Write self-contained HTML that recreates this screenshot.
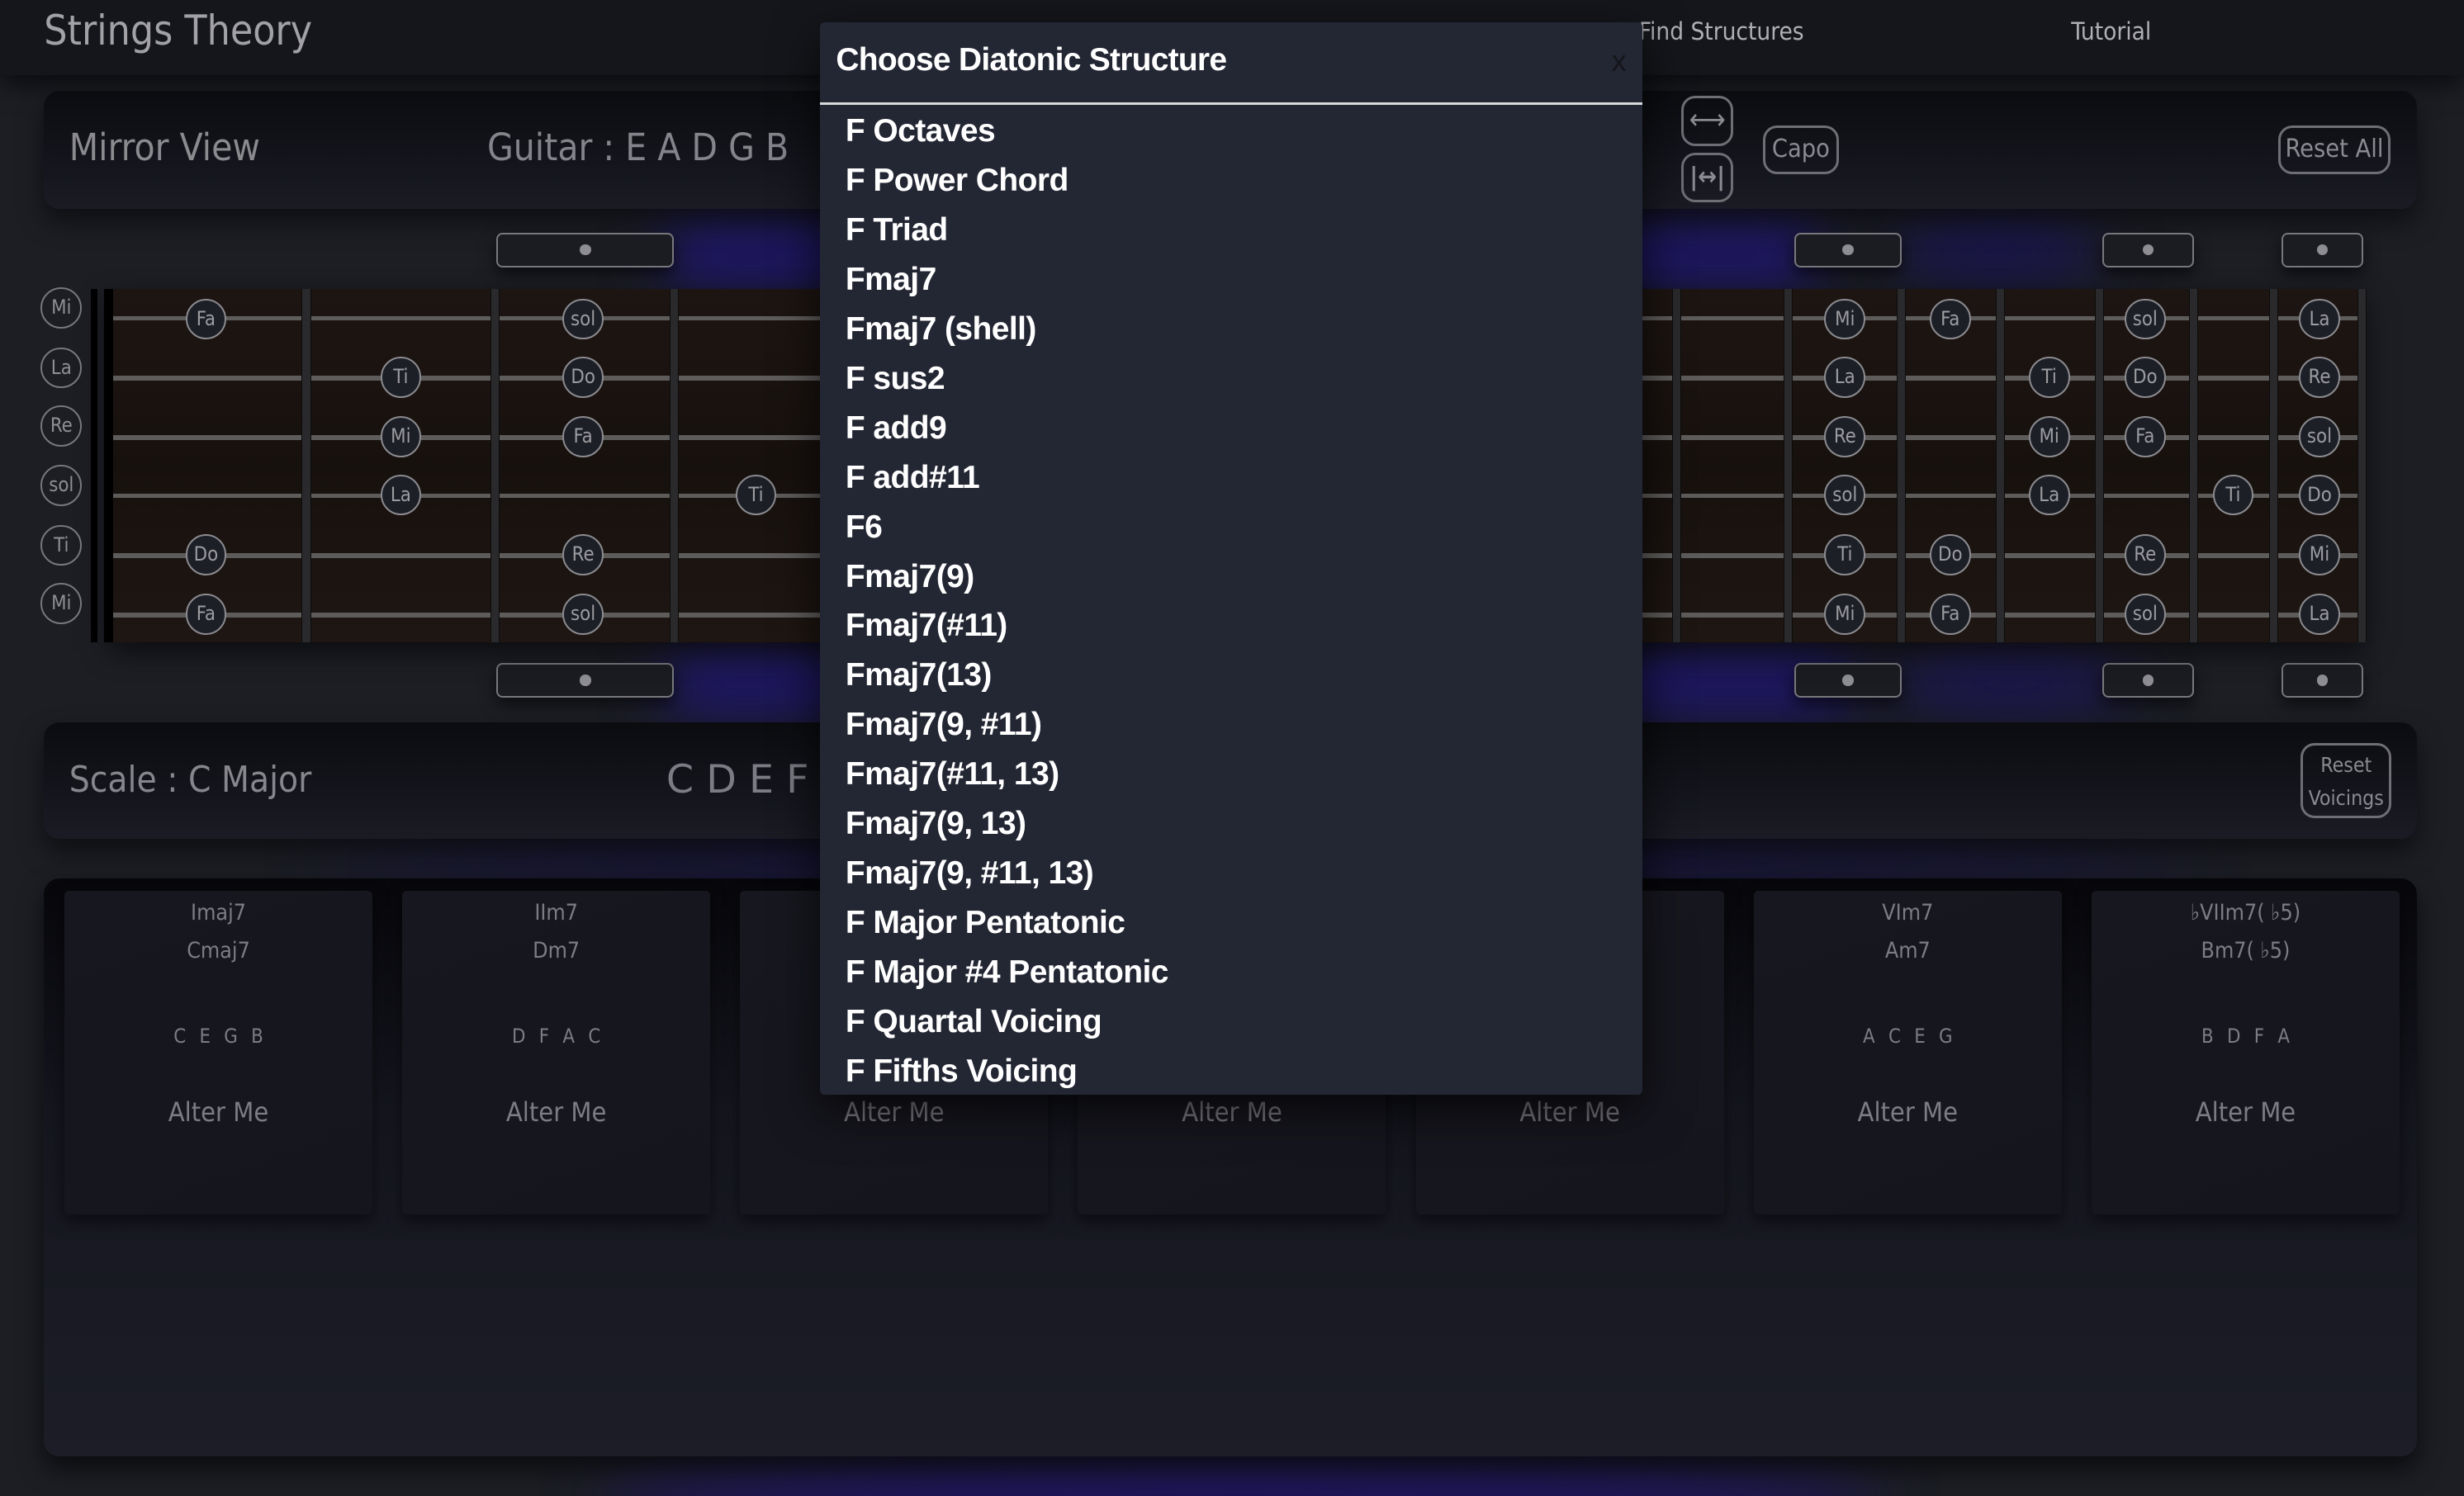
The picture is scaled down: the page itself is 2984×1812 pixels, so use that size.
<!DOCTYPE html>
<html><head><meta charset="utf-8"><style>
html,body{margin:0;padding:0;background:#1b1d23;overflow:hidden;width:2984px;height:1812px}
#root{zoom:1.90306;position:relative;width:1568px;height:952px;overflow:hidden;background:#1c1e24;font-family:"DejaVu Sans","Liberation Sans",sans-serif;color:#8d8d93}
.a{position:absolute}
.glow{position:absolute;border-radius:50%;filter:blur(18px)}
.hdr{left:0;top:0;width:1568px;height:48px;background:#15161b;box-shadow:0 6px 14px rgba(0,0,0,.6)}
.panel{border-radius:10px;background:linear-gradient(180deg,#0b0c10 0%,#1a1b24 100%);box-shadow:0 8px 16px rgba(0,0,0,.5)}
.btn{border:2px solid #6e6e74;border-radius:9px;box-sizing:border-box;color:#8a8a90;text-align:center;font-family:"DejaVu Sans Condensed","DejaVu Sans",sans-serif}
.mk{height:22px;border:1.5px solid #77777c;border-radius:4px;background:#1b1c22;box-sizing:border-box;box-shadow:0 4px 10px rgba(0,0,0,.6)}
.mk:after{content:"";position:absolute;left:50%;top:50%;width:7px;height:7px;margin:-3.5px 0 0 -3.5px;border-radius:50%;background:#8e8e92}
.fb{left:70px;top:184px;width:1435px;height:225px;background:linear-gradient(180deg,#1d1512 0%,#17110e 50%,#1e1612 100%)}
.str{position:absolute;left:72px;width:1430px;height:3px;background:#5e5c5b}
.fret{position:absolute;top:184px;width:6px;height:225px;background:#2a2a2c;border-left:1px solid #0c0c0c;border-right:1px solid #0c0c0c;box-sizing:border-box}
.n{position:absolute;width:24px;height:24px;margin:-13px 0 0 -13px;border:1.5px solid #8b8b8f;border-radius:50%;background:#1d1f27;color:#9c9ca0;font-size:12.5px;line-height:24px;text-align:center;font-family:"DejaVu Sans Condensed","DejaVu Sans",sans-serif}
.lab{position:absolute;left:26px;width:24px;height:24px;border:1.5px solid #77777c;border-radius:50%;color:#8f8f93;font-size:12.5px;line-height:24px;text-align:center;font-family:"DejaVu Sans Condensed","DejaVu Sans",sans-serif}
.card{position:absolute;top:567px;width:196px;height:206px;background:linear-gradient(160deg,#17181f,#15151d);border-radius:3px;box-shadow:0 4px 10px rgba(0,0,0,.5);text-align:center;color:#7c7c82}
.card .r{position:absolute;left:0;width:100%;font-family:"DejaVu Sans Condensed","DejaVu Sans",sans-serif}
.modal{left:522px;top:14px;width:523px;height:683px;background:#232633;box-shadow:0 10px 30px rgba(0,0,0,.7);border-radius:3px;font-family:"Liberation Sans",sans-serif;color:#fff}
.modal .it{position:absolute;left:16px;font-size:20.5px;font-weight:bold;letter-spacing:-.3px}
</style></head><body><div id="root">

<div class="glow" style="left:420px;top:138px;width:740px;height:48px;background:#1d1564;border-radius:20px"></div>
<div class="glow" style="left:1200px;top:140px;width:140px;height:40px;background:#18134d"></div>
<div class="glow" style="left:420px;top:412px;width:760px;height:46px;background:#1d1564;border-radius:20px"></div>
<div class="glow" style="left:1200px;top:415px;width:160px;height:40px;background:#1a1450"></div>
<div class="glow" style="left:200px;top:536px;width:1200px;height:26px;background:#150f45"></div>
<div class="glow" style="left:380px;top:930px;width:820px;height:50px;background:#1f1460"></div>

<div class="a hdr"></div>
<div class="a" style="left:28px;top:4px;font-size:26px;color:#a2a2a6;font-family:'DejaVu Sans Condensed','DejaVu Sans',sans-serif">Strings Theory</div>
<div class="a" style="left:1043px;top:11px;font-size:15.5px;color:#b0b0b4;font-family:'DejaVu Sans Condensed','DejaVu Sans',sans-serif">Find Structures</div>
<div class="a" style="left:1318px;top:11px;font-size:15.5px;color:#b0b0b4;font-family:'DejaVu Sans Condensed','DejaVu Sans',sans-serif">Tutorial</div>

<div class="a panel" style="left:28px;top:58px;width:1510px;height:75px"></div>
<div class="a" style="left:44px;top:80px;font-size:24px;color:#8a8a8f;font-family:'DejaVu Sans Condensed','DejaVu Sans',sans-serif">Mirror View</div>
<div class="a" style="left:310px;top:80px;font-size:24px;color:#84848b;font-family:'DejaVu Sans Condensed','DejaVu Sans',sans-serif">Guitar : E A D G B</div>
<div class="a btn" style="left:1070px;top:61px;width:33px;height:32px;font-size:18px;line-height:28px">⟷</div>
<div class="a btn" style="left:1070px;top:97px;width:33px;height:32px;font-size:16px;line-height:28px;font-weight:bold">|↔|</div>
<div class="a btn" style="left:1122px;top:80px;width:48px;height:31px;font-size:16px;line-height:27px">Capo</div>
<div class="a btn" style="left:1450px;top:80px;width:71px;height:31px;font-size:16px;line-height:27px">Reset All</div>

<div class="a mk" style="left:316px;top:148px;width:113px"></div>
<div class="a mk" style="left:1142px;top:148px;width:68px"></div>
<div class="a mk" style="left:1338px;top:148px;width:58px"></div>
<div class="a mk" style="left:1452px;top:148px;width:52px"></div>
<div class="a mk" style="left:316px;top:422px;width:113px"></div>
<div class="a mk" style="left:1142px;top:422px;width:68px"></div>
<div class="a mk" style="left:1338px;top:422px;width:58px"></div>
<div class="a mk" style="left:1452px;top:422px;width:52px"></div>

<div class="a fb" style="box-shadow:0 6px 16px rgba(0,0,0,.6)"></div>
<div class="a" style="left:58px;top:184px;width:4px;height:225px;background:#000"></div>
<div class="a" style="left:66px;top:184px;width:6px;height:225px;background:#000"></div>
<div class="str" style="top:201px"></div><div class="str" style="top:239px"></div><div class="str" style="top:277px"></div>
<div class="str" style="top:314px"></div><div class="str" style="top:352px"></div><div class="str" style="top:390px"></div>
<div class="fret" style="left:192px"></div><div class="fret" style="left:312px"></div><div class="fret" style="left:426px"></div>
<div class="fret" style="left:534px"></div>
<div class="fret" style="left:1064px"></div><div class="fret" style="left:1135px"></div><div class="fret" style="left:1207px"></div>
<div class="fret" style="left:1270px"></div><div class="fret" style="left:1333px"></div><div class="fret" style="left:1393px"></div>
<div class="fret" style="left:1444px"></div><div class="fret" style="left:1500px"></div>

<div class="lab" style="top:183px">Mi</div><div class="lab" style="top:221px">La</div><div class="lab" style="top:258px">Re</div>
<div class="lab" style="top:296px">sol</div><div class="lab" style="top:334px">Ti</div><div class="lab" style="top:371px">Mi</div>

<div class="n" style="left:131px;top:203px">Fa</div><div class="n" style="left:371px;top:203px">sol</div>
<div class="n" style="left:255px;top:240px">Ti</div><div class="n" style="left:371px;top:240px">Do</div>
<div class="n" style="left:255px;top:278px">Mi</div><div class="n" style="left:371px;top:278px">Fa</div>
<div class="n" style="left:255px;top:315px">La</div><div class="n" style="left:481px;top:315px">Ti</div>
<div class="n" style="left:131px;top:353px">Do</div><div class="n" style="left:371px;top:353px">Re</div>
<div class="n" style="left:131px;top:391px">Fa</div><div class="n" style="left:371px;top:391px">sol</div>

<div class="n" style="left:1174px;top:203px">Mi</div><div class="n" style="left:1174px;top:240px">La</div><div class="n" style="left:1174px;top:278px">Re</div>
<div class="n" style="left:1174px;top:315px">sol</div><div class="n" style="left:1174px;top:353px">Ti</div><div class="n" style="left:1174px;top:391px">Mi</div>
<div class="n" style="left:1241px;top:203px">Fa</div><div class="n" style="left:1241px;top:353px">Do</div><div class="n" style="left:1241px;top:391px">Fa</div>
<div class="n" style="left:1304px;top:240px">Ti</div><div class="n" style="left:1304px;top:278px">Mi</div><div class="n" style="left:1304px;top:315px">La</div>
<div class="n" style="left:1365px;top:203px">sol</div><div class="n" style="left:1365px;top:240px">Do</div><div class="n" style="left:1365px;top:278px">Fa</div>
<div class="n" style="left:1365px;top:353px">Re</div><div class="n" style="left:1365px;top:391px">sol</div>
<div class="n" style="left:1421px;top:315px">Ti</div>
<div class="n" style="left:1476px;top:203px">La</div><div class="n" style="left:1476px;top:240px">Re</div><div class="n" style="left:1476px;top:278px">sol</div>
<div class="n" style="left:1476px;top:315px">Do</div><div class="n" style="left:1476px;top:353px">Mi</div><div class="n" style="left:1476px;top:391px">La</div>

<div class="a panel" style="left:28px;top:460px;width:1510px;height:74px"></div>
<div class="a" style="left:44px;top:483px;font-size:23px;color:#86868c;font-family:'DejaVu Sans Condensed','DejaVu Sans',sans-serif">Scale : C Major</div>
<div class="a" style="left:424px;top:482px;font-size:25px;color:#7c7c84;letter-spacing:0px">C D E F</div>
<div class="a btn" style="left:1464px;top:473px;width:58px;height:48px;font-size:13px;line-height:21px;padding-top:2px">Reset<br>Voicings</div>

<div class="a" style="left:28px;top:559px;width:1510px;height:368px;border-radius:10px;background:linear-gradient(180deg,#07070b 0%,#15161e 40%,#1c1d27 100%);box-shadow:0 8px 16px rgba(0,0,0,.6)"></div>

<div class="card" style="left:41px"><div class="r" style="top:6px;font-size:14px">Imaj7</div><div class="r" style="top:30px;font-size:14px">Cmaj7</div><div class="r" style="top:85px;font-size:12.5px;word-spacing:5px">C E G B</div><div class="r" style="top:131px;font-size:17px">Alter Me</div></div>
<div class="card" style="left:256px"><div class="r" style="top:6px;font-size:14px">IIm7</div><div class="r" style="top:30px;font-size:14px">Dm7</div><div class="r" style="top:85px;font-size:12.5px;word-spacing:5px">D F A C</div><div class="r" style="top:131px;font-size:17px">Alter Me</div></div>
<div class="card" style="left:471px"><div class="r" style="top:131px;font-size:17px">Alter Me</div></div>
<div class="card" style="left:686px"><div class="r" style="top:131px;font-size:17px">Alter Me</div></div>
<div class="card" style="left:901px"><div class="r" style="top:131px;font-size:17px">Alter Me</div></div>
<div class="card" style="left:1116px"><div class="r" style="top:6px;font-size:14px">VIm7</div><div class="r" style="top:30px;font-size:14px">Am7</div><div class="r" style="top:85px;font-size:12.5px;word-spacing:5px">A C E G</div><div class="r" style="top:131px;font-size:17px">Alter Me</div></div>
<div class="card" style="left:1331px"><div class="r" style="top:6px;font-size:14px">♭VIIm7( ♭5)</div><div class="r" style="top:30px;font-size:14px">Bm7( ♭5)</div><div class="r" style="top:85px;font-size:12.5px;word-spacing:5px">B D F A</div><div class="r" style="top:131px;font-size:17px">Alter Me</div></div>

<div class="a modal">
  <div class="a" style="left:10px;top:13px;font-size:20.5px;font-weight:bold;letter-spacing:-.4px">Choose Diatonic Structure</div>
  <div class="a" style="right:10px;top:14px;font-size:19px;color:#15161c">x</div>
  <div class="a" style="left:0;top:51px;width:523px;height:1.5px;background:#d8d9dc"></div>
  <div class="it" style="top:58px">F Octaves</div>
  <div class="it" style="top:89.5px">F Power Chord</div>
  <div class="it" style="top:121px">F Triad</div>
  <div class="it" style="top:152.5px">Fmaj7</div>
  <div class="it" style="top:184px">Fmaj7 (shell)</div>
  <div class="it" style="top:215.5px">F sus2</div>
  <div class="it" style="top:247px">F add9</div>
  <div class="it" style="top:278.5px">F add#11</div>
  <div class="it" style="top:310px">F6</div>
  <div class="it" style="top:341.5px">Fmaj7(9)</div>
  <div class="it" style="top:373px">Fmaj7(#11)</div>
  <div class="it" style="top:404.5px">Fmaj7(13)</div>
  <div class="it" style="top:436px">Fmaj7(9, #11)</div>
  <div class="it" style="top:467.5px">Fmaj7(#11, 13)</div>
  <div class="it" style="top:499px">Fmaj7(9, 13)</div>
  <div class="it" style="top:530.5px">Fmaj7(9, #11, 13)</div>
  <div class="it" style="top:562px">F Major Pentatonic</div>
  <div class="it" style="top:593.5px">F Major #4 Pentatonic</div>
  <div class="it" style="top:625px">F Quartal Voicing</div>
  <div class="it" style="top:656.5px">F Fifths Voicing</div>
</div>

</div></body></html>
